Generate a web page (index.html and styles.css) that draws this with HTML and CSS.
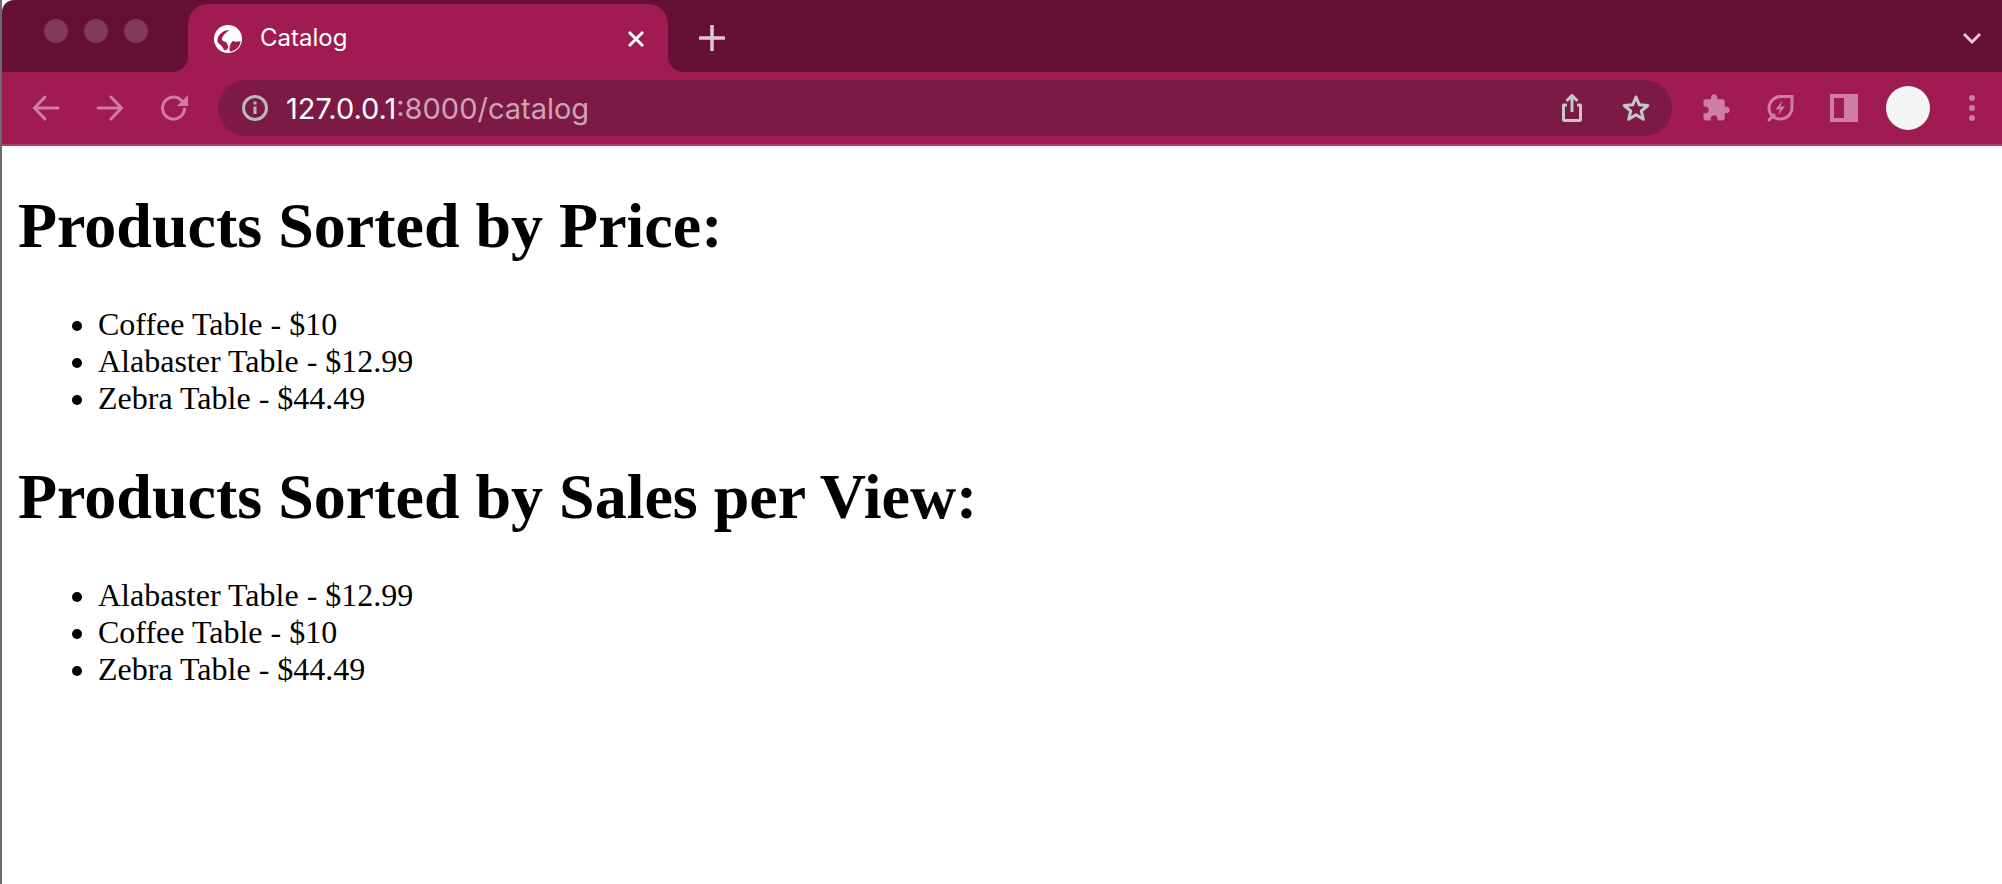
FILE: index.html

```html
<!DOCTYPE html>
<html>
<head>
<meta charset="utf-8"/>
<title>Catalog</title>
<link rel="stylesheet" href="styles.css">
</head>
<body>
<div class="window">
  <div class="tabstrip">
    <div class="lights"><span></span><span></span><span></span></div>
    <div class="tab">
      <svg class="favicon" viewBox="0 0 28 28"><circle cx="14" cy="14" r="14" fill="#fff"/><path fill="#9f1b50" d="M3.300 16C3.500 12 5 10 7 8.200 9.500 6 12.500 5 15.300 5 12.500 7.500 10 9 9.300 10.700 8.300 12.300 7.500 14 8 14.700 9 16.500 11 16.500 12 17.300 13.500 18.800 14.300 21 14 22.700 13.500 24.500 12 25.300 10 25.300 9.500 23 8 21.500 6.700 20 5 18.500 3.500 17.500 3.300 16z"/><path fill="#9f1b50" d="M26.700 16c-2.700 1-5.700.8-8 0-1.200 1-2.200 3-3 5.500-.5 2-.4 4 1 5.200 2.300-.7 5.300-1.900 7.300-4.200 1.500-2 2.300-4 2.700-6.500z"/></svg>
      <span class="tab-title">Catalog</span>
      <svg class="tab-close" viewBox="0 0 18 18"><path d="M2 2l14 14M16 2L2 16"/></svg>
    </div>
    <svg class="new-tab" viewBox="0 0 26 26"><path d="M13 1v24M1 13h24"/></svg>
    <svg class="tab-list" viewBox="0 0 20 12"><path d="M2 2l8 8 8-8"/></svg>
  </div>

  <div class="toolbar">
    <div class="btn-group">
      <div class="btn"><svg viewBox="0 0 28 28"><path d="M26 14H3M13 3L2.500 14 13 25"/></svg></div>
      <div class="btn"><svg viewBox="0 0 28 28"><path d="M2 14h23M15 3l10.500 11L15 25"/></svg></div>
      <div class="btn"><svg viewBox="0 0 28 28"><path d="M21.500 6.500A11 11 0 1 0 24.500 15"/><path class="solid" d="M28 1v11H17z"/></svg></div>
    </div>

    <div class="omnibox">
      <svg class="omni-icon info" viewBox="0 0 28 28"><circle cx="14" cy="14" r="11.500"/><path d="M14 12.500V20M14 7.500v3"/></svg>
      <div class="url"><span class="url-host">127.0.0.1</span>:8000/catalog</div>
      <svg class="omni-icon" viewBox="0 0 28 28"><path d="M9 11H5.500v14.500q0 1 1 1h15q1 0 1-1V11H19M14 18V2M8.500 7L14 1.500 19.500 7"/></svg>
      <svg class="omni-icon" viewBox="0 0 28 28"><path d="M14 3l3.300 7.800 8.500.7-6.500 5.500 2 8.300L14 20.800l-7.300 4.500 2-8.300-6.500-5.500 8.500-.7z"/></svg>
    </div>

    <div class="btn-group">
      <div class="btn"><svg class="fill-icon" viewBox="0 0 24 24"><path d="M20.500 11H19V7c0-1.100-.9-2-2-2h-4V3.500C13 2.120 11.880 1 10.500 1S8 2.120 8 3.500V5H4c-1.100 0-1.990.9-1.990 2v3.800H3.500c1.490 0 2.700 1.210 2.700 2.700s-1.210 2.700-2.700 2.700H2V20c0 1.100.9 2 2 2h3.800v-1.500c0-1.490 1.210-2.700 2.700-2.700 1.490 0 2.700 1.210 2.700 2.700V22H17c1.100 0 2-.9 2-2v-4h1.500c1.380 0 2.500-1.120 2.500-2.500S21.880 11 20.500 11z"/></svg></div>
      <div class="btn"><svg viewBox="0 0 28 28"><path d="M26 2.500H15C8 2.500 3 8 3 14c0 6.500 5 11 11 11 7 0 12-5 12-12zM8 21l-5 5"/><path class="solid" d="M16.500 6.500L9.500 15.500H14l-2 6 7-9h-4.500z"/></svg></div>
      <div class="btn"><div class="side-panel"></div></div>
      <div class="btn"><div class="avatar"></div></div>
      <div class="btn"><div class="menu-dots"><span></span><span></span><span></span></div></div>
    </div>
  </div>

  <div class="page">
    <h1>Products Sorted by Price:</h1>
    <ul>
      <li>Coffee Table - $10</li>
      <li>Alabaster Table - $12.99</li>
      <li>Zebra Table - $44.49</li>
    </ul>
    <h1>Products Sorted by Sales per View:</h1>
    <ul>
      <li>Alabaster Table - $12.99</li>
      <li>Coffee Table - $10</li>
      <li>Zebra Table - $44.49</li>
    </ul>
  </div>
</div>
</body>
</html>
```

FILE: styles.css

```css
html, body { height: 100%; margin: 0; }
body { background: #1c1c1c; overflow: hidden; }

.window {
  height: 100%;
  display: flex; flex-direction: column;
  border-left: 2px solid #6b6b6b;
  background: #fff;
}

/* tab strip */
.tabstrip {
  height: 72px; flex: none;
  display: flex; align-items: flex-end;
  background: #650f32;
  border-top-left-radius: 12px;
}
.lights {
  width: 186px; height: 72px; flex: none;
  display: flex; gap: 16px;
  padding: 19px 0 0 42px;
  box-sizing: border-box;
}
.lights span {
  width: 24px; height: 24px;
  border-radius: 50%;
  background: #7f3a56;
}
.tab {
  width: 480px; height: 68px; flex: none;
  display: flex; align-items: center;
  padding: 0 22px 0 26px;
  box-sizing: border-box;
  position: relative;
  background: #9f1b50;
  border-radius: 20px 20px 0 0;
  color: #fff;
}
.tab::before, .tab::after {
  content: ""; position: absolute; bottom: 0;
  width: 16px; height: 16px;
}
.tab::before {
  left: -16px;
  background: radial-gradient(circle at 0 0, transparent 16px, #9f1b50 16.5px);
}
.tab::after {
  right: -16px;
  background: radial-gradient(circle at 100% 0, transparent 16px, #9f1b50 16.5px);
}
.favicon { width: 28px; height: 28px; flex: none; margin-top: 2px; }
.tab-title {
  margin-left: 18px;
  font: 24px "Inter", "Liberation Sans", sans-serif;
  flex: 1;
  padding-bottom: 1px;
}
.tab-close {
  width: 18px; height: 18px; flex: none;
  margin: 2px 1px 0 0;
  fill: none; stroke: #fff; stroke-width: 3;
}
.new-tab {
  width: 26px; height: 26px; flex: none;
  margin: 0 0 21px 31px;
  fill: none; stroke: #e0c8d2; stroke-width: 3.500; stroke-linecap: round;
}
.tab-list {
  width: 20px; height: 12px; flex: none;
  margin: 0 20px 28px auto;
  fill: none; stroke: #e0c8d2; stroke-width: 3;
}

/* toolbar */
.toolbar {
  height: 72px; flex: none;
  display: flex; align-items: center;
  padding-left: 14px;
  background: #9f1b50;
  border-bottom: 2px solid #b03d6d;
}
.btn-group { display: flex; gap: 4px; flex: none; }
.btn {
  width: 60px; height: 56px;
  display: flex; align-items: center; justify-content: center;
}
.btn svg {
  width: 28px; height: 28px;
  fill: none; stroke: #cf7da0; stroke-width: 3; stroke-linecap: round;
}
.btn svg .solid { fill: #cf7da0; stroke: none; }
.btn svg.fill-icon { width: 30px; height: 30px; fill: #cf7da0; stroke: none; }

.omnibox {
  flex: 1; height: 56px;
  margin: 0 14px;
  display: flex; align-items: center; gap: 36px;
  padding: 0 22px 0 23px;
  background: #7c1a44;
  border-radius: 28px;
}
.omni-icon {
  width: 28px; height: 28px; flex: none;
  fill: none; stroke: #c4c8c8; stroke-width: 3; stroke-linejoin: round;
}
.info { stroke: #b4bcbd; margin-right: -19px; }
.url {
  flex: 1;
  font: 29px "Inter", "Liberation Sans", sans-serif;
  color: #cfa3b6;
}
.url-host { color: #fff; }

.side-panel {
  width: 28px; height: 28px;
  box-sizing: border-box;
  border: 4px solid #cf7da0;
  border-right-width: 14px;
}
.avatar {
  width: 44px; height: 44px;
  border-radius: 50%;
  background: #f5f5f5;
}
.menu-dots { display: flex; flex-direction: column; gap: 4px; }
.menu-dots span {
  width: 6px; height: 6px;
  border-radius: 50%;
  background: #cf7da0;
}

/* page content, default browser look at 2x */
.page {
  flex: 1;
  padding: 0 16px;
  font: 32px/37px "Liberation Serif", "Times New Roman", serif;
  color: #000;
}
h1 {
  margin: 43px 0;
  font-size: 64px; line-height: 74px;
  font-weight: bold;
}
ul { margin: 32px 0; padding-left: 80px; }
```
